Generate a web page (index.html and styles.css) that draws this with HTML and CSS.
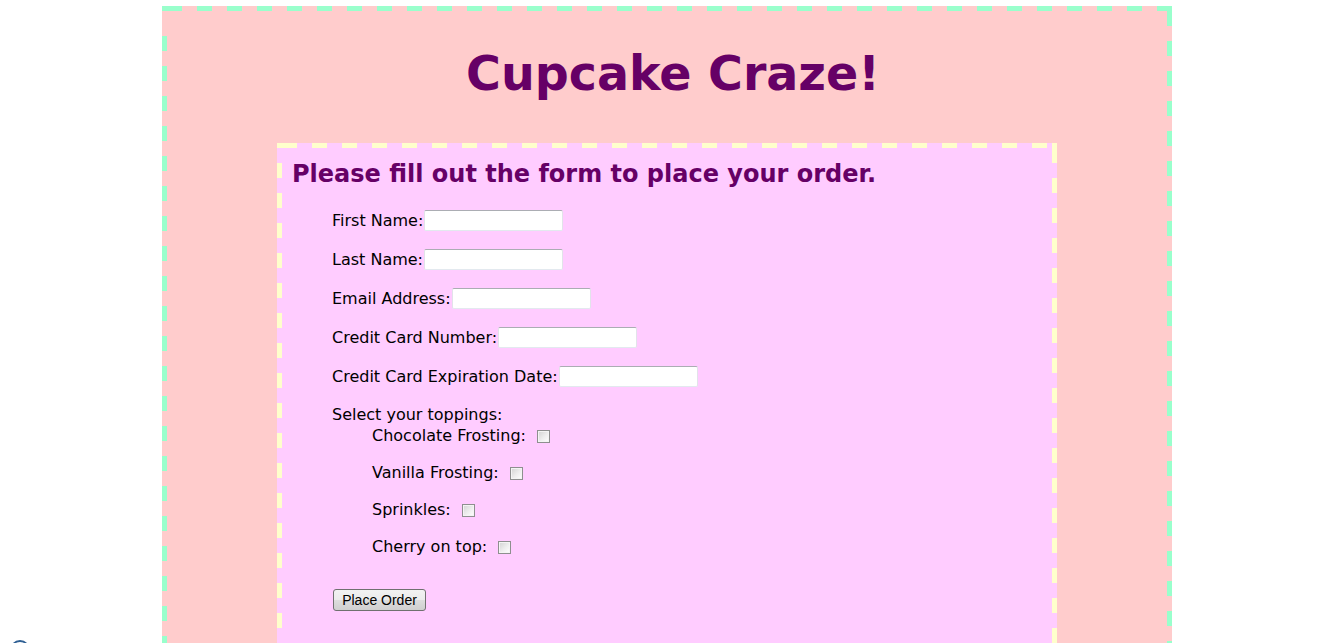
FILE: index.html
```html
<!DOCTYPE html>
<html>
<head>
<meta charset="utf-8">
<title>Cupcake Craze!</title>
<link rel="stylesheet" href="styles.css">
</head>
<body>
<div class="page dashed">
  <h1 class="title">Cupcake Craze!</h1>
  <div class="order dashed">
    <h2 class="lead">Please fill out the form to place your order.</h2>
    <form class="form">
      <div class="field"><label class="label">First Name:</label><input class="text" type="text"></div>
      <div class="field"><label class="label">Last Name:</label><input class="text" type="text"></div>
      <div class="field"><label class="label">Email Address:</label><input class="text" type="text"></div>
      <div class="field"><label class="label">Credit Card Number:</label><input class="text" type="text"></div>
      <div class="field"><label class="label">Credit Card Expiration Date:</label><input class="text" type="text"></div>
      <div class="toppings">
        <div class="toppings-title">Select your toppings:</div>
        <div class="topping-list">
          <div class="topping"><label class="label">Chocolate Frosting:</label><input class="check" type="checkbox"></div>
          <div class="topping"><label class="label">Vanilla Frosting:</label><input class="check" type="checkbox"></div>
          <div class="topping"><label class="label">Sprinkles:</label><input class="check" type="checkbox"></div>
          <div class="topping"><label class="label">Cherry on top:</label><input class="check" type="checkbox"></div>
        </div>
      </div>
      <div class="actions"><button class="btn" type="button">Place Order</button></div>
    </form>
  </div>
</div>
<div class="corner-icon"></div>
</body>
</html>
```

FILE: styles.css
```css
html, body {
  margin: 0;
  padding: 0;
  background: #ffffff;
}

body {
  font-family: "DejaVu Sans", Verdana, sans-serif;
  color: #000000;
  overflow: hidden;
}

/* dashed frame: 15px dashes / 15px gaps, drawn as background layers */
.dashed {
  border: 5px solid transparent;
  background:
    linear-gradient(var(--dash), var(--dash)) left top / 5px 5px no-repeat border-box,
    linear-gradient(var(--dash), var(--dash)) right top / 5px 5px no-repeat border-box,
    repeating-linear-gradient(90deg, transparent 0 5px, var(--dash) 5px 20px, transparent 20px 30px) left top / 100% 5px no-repeat border-box,
    repeating-linear-gradient(90deg, transparent 0 5px, var(--dash) 5px 20px, transparent 20px 30px) left bottom / 100% 5px no-repeat border-box,
    repeating-linear-gradient(180deg, transparent 0 5px, var(--dash) 5px 20px, transparent 20px 30px) right top / 5px 100% no-repeat border-box,
    repeating-linear-gradient(180deg, var(--dash) 0 15px, transparent 15px 30px) left 0 top var(--left-start) / 5px calc(100% - var(--left-start)) no-repeat border-box,
    var(--fill) border-box;
}

.page {
  --dash: #99ffcc;
  --fill: #ffcccc;
  --left-start: 30px;
  margin: 6px 0 0 162px;
  width: 1000px;
  padding-bottom: 120px;
}

.title {
  margin: 34px 0 40px;
  padding-left: 12px;
  font-size: 47.5px;
  line-height: 58px;
  font-weight: bold;
  text-align: center;
  color: #660066;
}

.order {
  --dash: #ffffcc;
  --fill: #ffccff;
  --left-start: 20px;
  width: 750px;
  margin: 0 auto;
  padding: 12px 10px 80px;
}

.lead {
  margin: 0 0 22px;
  font-size: 24px;
  line-height: 28px;
  font-weight: bold;
  color: #660066;
}

.form {
  margin: 0;
  padding-left: 40px;
  display: flex;
  flex-direction: column;
  font-size: 16px;
}

.field {
  display: flex;
  align-items: center;
  height: 21px;
  margin-bottom: 18px;
}

.label {
  line-height: 19px;
  white-space: nowrap;
}

.text {
  box-sizing: border-box;
  width: 139px;
  height: 21px;
  margin: 0 0 0 1px;
  padding: 1px 3px;
  border: 1px solid #e2e3ea;
  border-top-color: #abadb3;
  border-bottom-color: #e3e9ef;
  border-radius: 2px;
  background: #ffffff;
  font: 13px "DejaVu Sans", sans-serif;
  outline: none;
}

.toppings-title {
  line-height: 19px;
  margin-bottom: 2px;
}

.topping-list {
  padding-left: 40px;
  display: flex;
  flex-direction: column;
  gap: 18px;
}

.topping {
  display: flex;
  align-items: center;
  height: 19px;
}

.check {
  -webkit-appearance: none;
  appearance: none;
  box-sizing: border-box;
  width: 13px;
  height: 13px;
  margin: 1px 0 0 11px;
  border: 1px solid #8e8f8f;
  background: linear-gradient(135deg, #d2d2d2 0%, #eeeeee 55%, #ffffff 100%);
  box-shadow: inset 0 0 0 1px #f4f4f4;
}

.actions {
  margin-top: 33px;
  padding-left: 1px;
}

.btn {
  box-sizing: border-box;
  width: 93px;
  height: 22px;
  padding: 0;
  border: 1px solid #707070;
  border-radius: 3px;
  background: linear-gradient(#f2f2f2 0%, #ebebeb 50%, #dddddd 50%, #cfcfcf 100%);
  font-family: "Liberation Sans", Arial, sans-serif;
  font-size: 14px;
  color: #000000;
}

.corner-icon {
  position: absolute;
  left: 10px;
  top: 640px;
  width: 16px;
  height: 16px;
  border: 2px solid #2e5f93;
  border-radius: 50%;
}
```
